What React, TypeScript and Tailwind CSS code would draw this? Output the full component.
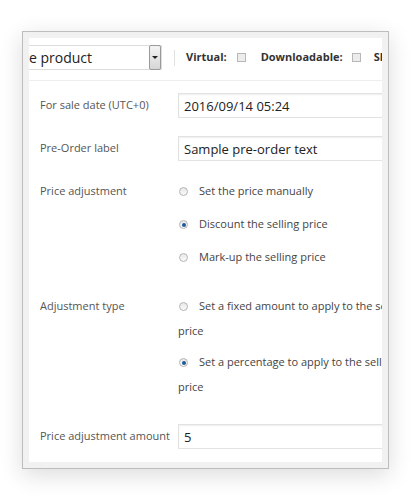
function Radio({ checked }: { checked?: boolean }) {
    return (
        <span className="inline-flex h-[9px] w-[9px] shrink-0 items-center justify-center rounded-full border border-[#b4b4b4] bg-gradient-to-b from-[#e8e8e8] to-[#fafafa]">
            {checked && <span className="h-[4px] w-[4px] rounded-full bg-[#1e5a9a]"></span>}
        </span>
    );
}

function Checkbox() {
    return <span className="inline-block h-[9px] w-[9px] border border-[#b8b8b8] bg-[#ececec]"></span>;
}

function TextField({ value }: { value: string }) {
    return (
        <div className="h-[25px] w-[260px] border border-[#e2e2e2] bg-white pl-[5px] text-[13px] leading-[24px] text-[#222] shadow-[inset_0_1px_2px_rgba(0,0,0,0.07)]">
            {value}
        </div>
    );
}

export default function App() {
    return (
        <div className="h-[500px] w-[411px] bg-white pl-[22px] pt-[31px] font-['Open_Sans',sans-serif]">
            <div className="h-[438px] w-[367px] border border-[#bdbdbd] bg-[#f1f1f1] p-[6px] shadow-[0_6px_22px_rgba(0,0,0,0.14)]">
                <div className="h-full w-full overflow-hidden bg-white">
                    {/* Product type bar */}
                    <div className="flex h-[43px] items-start whitespace-nowrap border-b border-[#eeeeee] pt-[7px]">
                        <div className="flex h-[25px] w-[133px] shrink-0 items-center justify-between border-y border-r border-[#dddddd]">
                            <span className="text-[14px] text-[#222]">e product</span>
                            <span className="flex h-[25px] w-[12px] items-center justify-center rounded-[2px] border border-[#9a9a9a] bg-gradient-to-b from-[#f4f4f4] to-[#d6d6d6]">
                                <span className="h-0 w-0 border-x-[3px] border-t-[3px] border-x-transparent border-t-[#222]"></span>
                            </span>
                        </div>
                        <div className="ml-[12px] mt-[5px] h-[16px] w-px shrink-0 bg-[#e0e0e0]"></div>
                        <div className="ml-[11px] flex h-[25px] shrink-0 items-center text-[11px] font-bold text-[#333]">
                            <span>Virtual:</span>
                            <span className="ml-[10px] flex"><Checkbox /></span>
                            <span className="ml-[15px]">Downloadable:</span>
                            <span className="ml-[9px] flex"><Checkbox /></span>
                            <span className="ml-[13px]">Shipping:</span>
                        </div>
                    </div>

                    <div className="grid grid-cols-[149px_1fr] text-[11px] text-[#555]">
                        {/* For sale date */}
                        <div className="mt-[12px] flex h-[25px] items-center pl-[11px]">For sale date (UTC+0)</div>
                        <div className="mt-[12px]"><TextField value="2016/09/14 05:24" /></div>

                        {/* Pre-order label */}
                        <div className="mt-[18px] flex h-[25px] items-center pl-[11px]">Pre-Order label</div>
                        <div className="mt-[18px]"><TextField value="Sample pre-order text" /></div>

                        {/* Price adjustment */}
                        <div className="mt-[14px] flex h-[33px] items-center pl-[11px]">Price adjustment</div>
                        <div className="mt-[14px] text-[#444]">
                            <div className="flex h-[33px] items-center gap-[11px] pl-[1px]"><Radio /><span>Set the price manually</span></div>
                            <div className="flex h-[33px] items-center gap-[11px] pl-[1px]"><Radio checked /><span>Discount the selling price</span></div>
                            <div className="flex h-[33px] items-center gap-[11px] pl-[1px]"><Radio /><span>Mark-up the selling price</span></div>
                        </div>

                        {/* Adjustment type */}
                        <div className="mt-[20px] flex h-[25px] items-center pl-[11px]">Adjustment type</div>
                        <div className="mt-[20px] whitespace-nowrap text-[#444]">
                            <div className="flex h-[25px] items-center gap-[11px] pl-[1px]"><Radio /><span>Set a fixed amount to apply to the selling</span></div>
                            <div className="flex h-[24px] items-center">price</div>
                            <div className="mt-[7px] flex h-[25px] items-center gap-[11px] pl-[1px]"><Radio checked /><span>Set a percentage to apply to the selling</span></div>
                            <div className="flex h-[24px] items-center">price</div>
                        </div>

                        {/* Amount */}
                        <div className="mt-[25px] flex h-[25px] items-center whitespace-nowrap pl-[11px]">Price adjustment amount</div>
                        <div className="mt-[25px]"><TextField value="5" /></div>
                    </div>
                </div>
            </div>
        </div>
    );
}
